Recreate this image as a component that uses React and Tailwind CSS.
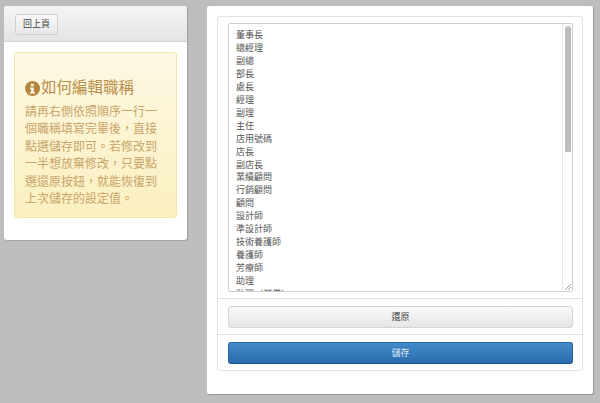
const titles = ['董事長', '總經理', '副總', '部長', '處長', '經理', '副理', '主任', '店用號碼', '店長', '副店長', '業績顧問', '行銷顧問', '顧問', '設計師', '準設計師', '技術養護師', '養護師', '芳療師', '助理', '助理（儲備）'];

export default function App() {
  return (
    <div className="h-[403px] w-[600px] overflow-hidden bg-[#bdbdbd] pt-[6px] pl-[4px] flex items-start font-['Liberation_Sans','Noto_Sans_CJK_TC',sans-serif]">
      <div className="w-[183px] h-[234px] bg-white rounded-[3px] shadow-[1px_1px_1px_rgba(0,0,0,0.15)] overflow-hidden">
        <div className="h-[36px] pl-[11px] pt-[8px] border-b border-[#d4d4d4] bg-gradient-to-b from-[#f5f5f5] to-[#e4e4e4]">
          <button className="block w-[43px] h-[21px] rounded-[3px] border border-[#cfcfcf] bg-gradient-to-b from-[#fafafa] to-[#e6e6e6] text-[9px] leading-[19px] text-[#444]">回上頁</button>
        </div>
        <div className="mt-[10px] mx-[10px] h-[166px] w-[163px] rounded-[3px] border border-[#f6e6a6] bg-gradient-to-b from-[#fdf8e3] to-[#fbf0c0] pl-[10px] pr-[8px] pt-[23px] text-[#c9a56a]">
          <div className="flex items-center h-[24px] text-[15.5px] leading-[24px] text-[#b98f4b]">
            <svg viewBox="0 0 16 16" className="w-[15px] h-[15px] shrink-0 mr-[1px]">
              <circle cx="8" cy="8" r="8" fill="#b5853f" />
              <rect x="6.2" y="3" width="3.2" height="2.6" fill="#fdf8e3" />
              <path d="M5.4 6.8h4v5h1.2v1.6H5.2v-1.6h1.3V8.4H5.4z" fill="#fdf8e3" />
            </svg>
            <span>如何編輯職稱</span>
          </div>
          <p className="mt-[4px] text-[12px] leading-[17.4px]">請再右側依照順序一行一個職稱填寫完畢後，直接點選儲存即可。若修改到一半想放棄修改，只要點選還原按鈕，就能恢復到上次儲存的設定值。</p>
        </div>
      </div>

      <div className="ml-[20px] w-[386px] h-[388px] bg-white rounded-[2px] shadow-[1px_1px_1px_rgba(0,0,0,0.2)] p-[10px]">
        <div className="w-[366px] h-[355px] rounded-[3px] border border-[#e2e2e2] bg-white">
          <div className="pt-[6px] px-[10px] pb-[6px] border-b border-[#e2e2e2]">
            <div className="flex h-[269px] w-[345px] rounded-[2px] border border-[#cfcfcf] overflow-hidden">
              <div className="flex-1 overflow-hidden pl-[7px] pt-[5px] text-[9px] leading-[12.95px] text-[#555]">
                {titles.map((title, index) => (
                  <div key={index}>{title}</div>
                ))}
              </div>
              <div className="w-[10px] border-l border-[#e8e8e8] flex flex-col items-center pt-[2px]">
                <div className="w-[6px] h-[126px] rounded-t-[3px] rounded-b-[1px] bg-[#bcbcbc]" />
                <div className="flex-1" />
                <svg viewBox="0 0 9 9" className="w-[9px] h-[9px]">
                  <path d="M2 8 8 2M5 8 8 5" stroke="#888" strokeWidth="0.8" fill="none" />
                </svg>
              </div>
            </div>
          </div>
          <div className="pt-[7px] px-[10px] pb-[6px] border-b border-[#e2e2e2]">
            <button className="block w-[345px] h-[22px] rounded-[3px] border border-[#d4d4d4] bg-gradient-to-b from-[#f8f8f8] to-[#e6e6e6] text-[9px] leading-[20px] text-[#444]">還原</button>
          </div>
          <div className="pt-[7px] px-[10px]">
            <button className="block w-[345px] h-[22px] rounded-[3px] border border-[#2a6299] border-b-[#1c5a96] bg-gradient-to-b from-[#428bca] to-[#2a6cab] text-[9px] leading-[20px] text-[#e4eef7]">儲存</button>
          </div>
        </div>
      </div>
    </div>
  );
}
